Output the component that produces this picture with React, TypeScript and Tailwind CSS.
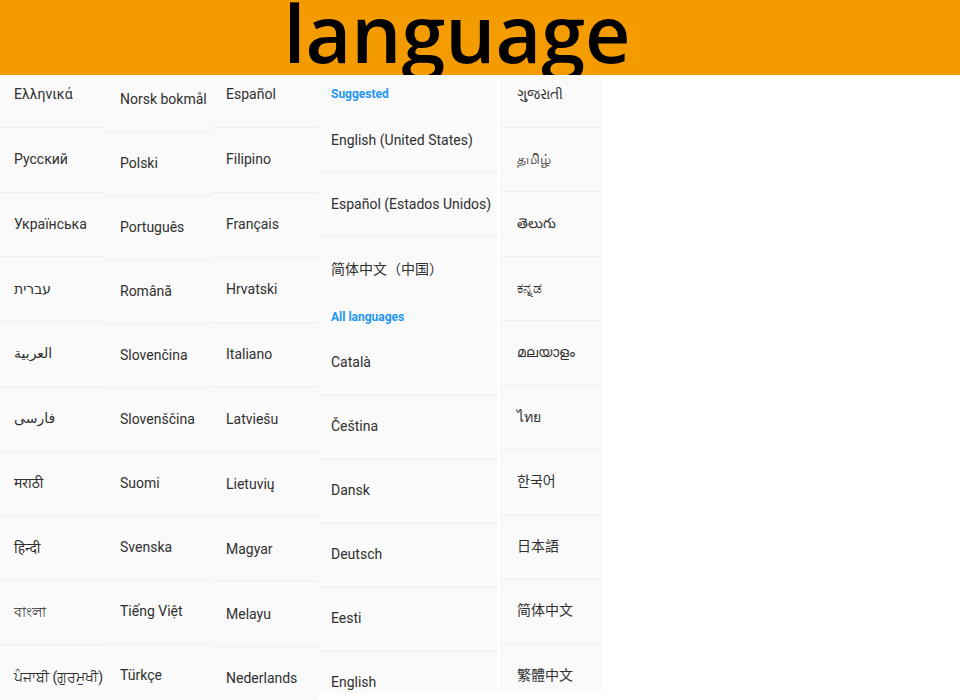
import React from "react";

const FONT = {
  fontFamily:
    "Roboto, 'Noto Sans', 'Noto Sans CJK SC', 'DejaVu Sans', sans-serif",
};

type Item = { t: string; h?: string; noLine?: boolean };

function Cell({ t, pl, rh }: { t: string; pl: string; rh: number }) {
  return (
    <div
      className={`shrink-0 flex items-center border-b border-[#efefef] text-[14px] text-[#303030] ${pl}`}
      style={{ height: rh }}
    >
      <span className="whitespace-nowrap">{t}</span>
    </div>
  );
}

function Col({
  items,
  off,
  w,
  pl,
  rh,
}: {
  items: string[];
  off: string;
  w: string;
  pl: string;
  rh: number;
}) {
  return (
    <div className={`${w} shrink-0 bg-[#fafafa] overflow-hidden flex flex-col`}>
      <div className={`flex flex-col ${off}`}>
        {items.map((t) => (
          <Cell key={t} t={t} pl={pl} rh={rh} />
        ))}
      </div>
    </div>
  );
}

export default function App() {
  const col1 = [
    "Ελληνικά",
    "Русский",
    "Українська",
    "עברית",
    "العربية",
    "فارسی",
    "मराठी",
    "हिन्दी",
    "বাংলা",
    "ਪੰਜਾਬੀ (ਗੁਰਮੁਖੀ)",
  ];
  const col2 = [
    "Norsk bokmål",
    "Polski",
    "Português",
    "Română",
    "Slovenčina",
    "Slovenščina",
    "Suomi",
    "Svenska",
    "Tiếng Việt",
    "Türkçe",
  ];
  const col3 = [
    "Español",
    "Filipino",
    "Français",
    "Hrvatski",
    "Italiano",
    "Latviešu",
    "Lietuvių",
    "Magyar",
    "Melayu",
    "Nederlands",
  ];
  const col5 = [
    "ગુજરાતી",
    "தமிழ்",
    "తెలుగు",
    "ಕನ್ನಡ",
    "മലയാളം",
    "ไทย",
    "한국어",
    "日本語",
    "简体中文",
    "繁體中文",
  ];
  const col4: Item[] = [
    { t: "Suggested", h: "h-[34px] pt-[3px]" },
    { t: "English (United States)" },
    { t: "Español (Estados Unidos)" },
    { t: "简体中文（中国）", noLine: true },
    { t: "All languages", h: "h-[30px] pt-[2px]" },
    { t: "Català" },
    { t: "Čeština" },
    { t: "Dansk" },
    { t: "Deutsch" },
    { t: "Eesti" },
    { t: "English" },
  ];

  return (
    <div className="w-[960px] h-[700px] bg-white overflow-hidden flex flex-col" style={FONT}>
      <div className="h-[75px] shrink-0 bg-[#f49b00] overflow-hidden flex justify-center relative z-10">
        <div
          className="text-[79px] leading-[80px] font-semibold text-black mt-[-7px] ml-[-46px]"
          style={{ fontFamily: "'Open Sans', 'Noto Sans', sans-serif" }}
        >
          language
        </div>
      </div>
      <div className="flex flex-1 min-h-0">
        <Col items={col1} off="mt-[-12px]" w="w-[105px]" pl="pl-[14px]" rh={64.75} />
        <Col items={col2} off="mt-[-7px]" w="w-[107px]" pl="pl-[15px]" rh={64} />
        <Col items={col3} off="mt-[-12px]" w="w-[106px]" pl="pl-[14px]" rh={64.9} />
        <div className="w-[179px] shrink-0 h-[618px] bg-[#fafafa] overflow-hidden flex flex-col">
          {col4.map((it) =>
            it.h ? (
              <div
                key={it.t}
                className={`shrink-0 flex items-center pl-[13px] text-[12px] font-bold text-[#2196f3] ${it.h}`}
              >
                {it.t}
              </div>
            ) : (
              <div
                key={it.t}
                className={`h-[64px] shrink-0 flex items-center pl-[13px] text-[14px] text-[#303030] ${
                  it.noLine ? "" : "border-b border-[#efefef]"
                }`}
              >
                <span className="whitespace-nowrap">{it.t}</span>
              </div>
            )
          )}
        </div>
        <div className="w-[3px] shrink-0 bg-white" />
        <div className="w-[102px] shrink-0 h-[617px] bg-[#fafafa] overflow-hidden flex flex-col">
          <div className="flex flex-col mt-[-12px]">
            {col5.map((t) => (
              <Cell key={t} t={t} pl="pl-[17px]" rh={64.5} />
            ))}
          </div>
        </div>
        <div className="flex-1 bg-white" />
      </div>
    </div>
  );
}
